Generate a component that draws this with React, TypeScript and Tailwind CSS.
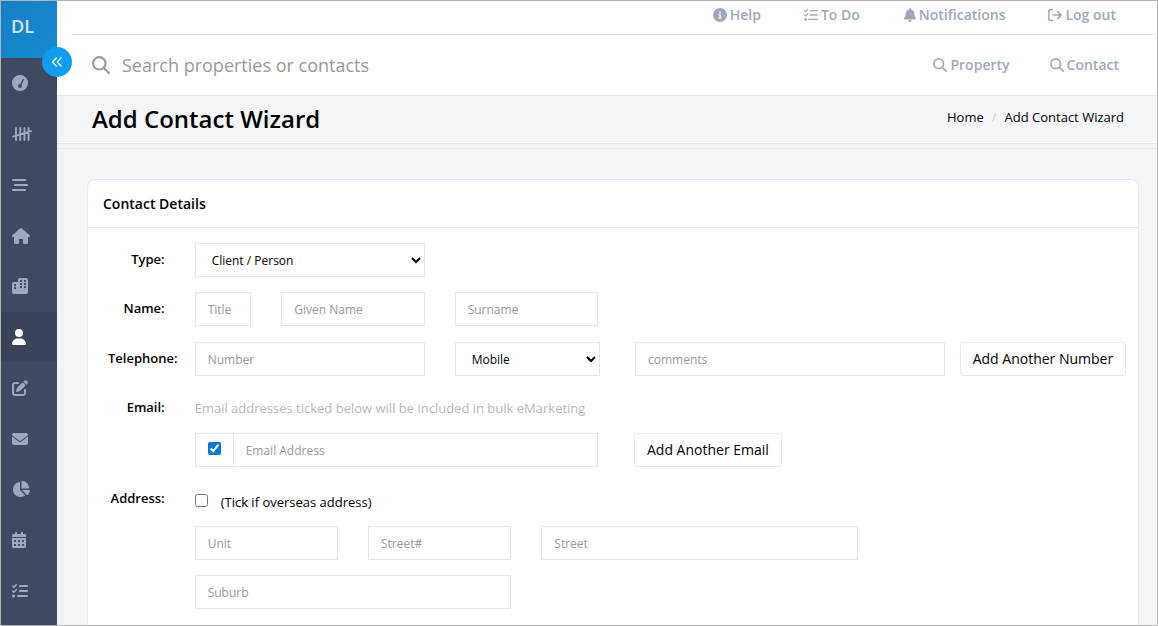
import React from "react";
import {
  FaBarsStaggered,
  FaBell,
  FaCalendarDays,
  FaChartPie,
  FaCircleInfo,
  FaEnvelope,
  FaGaugeSimpleHigh,
  FaHouse,
  FaListCheck,
  FaPenToSquare,
  FaUser,
} from "react-icons/fa6";

type IconProps = { className?: string };

function TallyIcon({ className }: IconProps) {
  return (
    <svg viewBox="0 0 20 16" className={className} fill="none" stroke="currentColor" strokeWidth="1.9" strokeLinecap="round" aria-hidden="true">
      <path d="M4 2v12M8.2 2v12M12.4 2v12M16.6 2v12M1 10.6 19 5.2" />
    </svg>
  );
}

function CityIcon({ className }: IconProps) {
  return (
    <svg viewBox="0 0 16 16" className={className} fill="currentColor" fillRule="evenodd" aria-hidden="true">
      <path d="M8 0h6a2 2 0 0 1 2 2v12a2 2 0 0 1-2 2H2a2 2 0 0 1-2-2V6a2 2 0 0 1 2-2h4V2a2 2 0 0 1 2-2ZM8 2v2h2V2ZM12 2v2h2V2ZM8 5v2h2V5ZM12 5v2h2V5ZM8 8v2h2V8ZM12 8v2h2V8ZM2 6v2h2V6ZM2 9v2h2V9Z" />
    </svg>
  );
}

function SearchIcon({ className }: IconProps) {
  return (
    <svg viewBox="0 0 18 18" className={className} fill="none" stroke="currentColor" strokeWidth="2.1" strokeLinecap="round" aria-hidden="true">
      <circle cx="7.3" cy="7.3" r="6.2" />
      <path d="m11.900 11.900 5 5" />
    </svg>
  );
}

function TaskListIcon({ className }: IconProps) {
  return (
    <svg viewBox="0 0 16 16" className={className} fill="none" stroke="currentColor" strokeWidth="1.5" strokeLinecap="round" strokeLinejoin="round" aria-hidden="true">
      <path d="M7 3h8.200M7 8h8.200M5.500 13h9.700M.8 3l1.200 1.200L4.200 1.600M.8 8l1.200 1.200L4.200 6.600" />
      <circle cx="1.900" cy="13" r=".7" />
    </svg>
  );
}

function LogOutIcon({ className }: IconProps) {
  return (
    <svg viewBox="0 0 16 16" className={className} fill="none" stroke="currentColor" strokeWidth="1.800" strokeLinecap="round" strokeLinejoin="round" aria-hidden="true">
      <path d="M5 1.800H3.200A2.200 2.200 0 0 0 1 4v8a2.200 2.200 0 0 0 2.200 2.200H5M5.800 8h9.200M11.200 4.200 15 8l-3.800 3.800" />
    </svg>
  );
}

function CollapseIcon({ className }: IconProps) {
  return (
    <svg viewBox="0 0 12 12" className={className} fill="none" stroke="currentColor" strokeWidth="1.300" strokeLinecap="round" strokeLinejoin="round" aria-hidden="true">
      <path d="M5.300 2 1.500 6l3.800 4M10 2 6.200 6l3.800 4" />
    </svg>
  );
}

const sideItems = [
  { label: "Dashboard", icon: <FaGaugeSimpleHigh className="h-4 w-4" /> },
  { label: "Tally", icon: <TallyIcon className="h-4 w-5" /> },
  { label: "Feed", icon: <FaBarsStaggered className="h-4 w-4" /> },
  { label: "Properties", icon: <FaHouse className="h-4 w-[18px]" /> },
  { label: "Projects", icon: <CityIcon className="h-4 w-4" /> },
  { label: "Contacts", icon: <FaUser className="h-4 w-3.5" />, active: true },
  { label: "Edit", icon: <FaPenToSquare className="h-4 w-4" /> },
  { label: "Mail", icon: <FaEnvelope className="h-4 w-4" /> },
  { label: "Reports", icon: <FaChartPie className="h-4 w-[18px]" /> },
  { label: "Calendar", icon: <FaCalendarDays className="h-4 w-3.5" /> },
  { label: "Tasks", icon: <FaListCheck className="h-4 w-4" /> },
];

const field =
  "block h-[34px] w-full min-w-0 border border-[#e5e6e7] bg-white px-3 text-xs text-black placeholder:text-[#999999] focus:outline-none";
const selectField =
  "block h-[34px] w-full min-w-0 border border-[#e5e6e7] bg-white px-3 text-xs text-black";
const formRow = "grid grid-cols-12";
const labelCell = "col-span-1 px-[15px] pt-[7px] text-right text-[13px] leading-[18px] font-semibold whitespace-nowrap";
const outlineButton =
  "h-[34px] rounded-[3px] border border-[#e7eaec] bg-white px-3 text-sm whitespace-nowrap text-black";
const navLink = "flex items-center gap-[3px]";

function Field({ label, className }: { label: string; className: string }) {
  return (
    <div className={className}>
      <input type="text" aria-label={label} placeholder={label} className={field} />
    </div>
  );
}

export default function App() {
  return (
    <div className="flex min-h-screen border border-[#b4b4b4] bg-[#f3f5f9] font-['Open_Sans',sans-serif] text-black">
      <aside className="relative w-14 shrink-0 bg-[#3f4a60]">
        <a href="#home" className="flex h-[57px] items-center bg-linear-to-br from-[#1680c6] to-[#178bd3] px-2.5 pb-2 text-lg font-semibold text-[#dce6ef]">
          DL
        </a>
        <button type="button" aria-label="Collapse menu" className="absolute top-[46px] left-[41px] z-10 flex h-[30px] w-[30px] items-center justify-center rounded-full bg-[#109cf1] text-white">
          <CollapseIcon className="h-3 w-3" />
        </button>
        <nav className="flex h-[558px] flex-col text-[#9fa8bd]">
          {sideItems.map((item) => (
            <a
              key={item.label}
              href={"#" + item.label.toLowerCase()}
              aria-label={item.label}
              className={item.active ? "flex flex-1 items-center bg-[#3a4459] pl-[11px] text-white" : "flex flex-1 items-center pl-[11px]"}
            >
              {item.icon}
            </a>
          ))}
        </nav>
      </aside>

      <div className="flex min-w-0 flex-1 flex-col">
        <header className="border-b border-[#e7eaec] bg-white">
          <nav className="mr-[3px] ml-[15px] flex h-[34px] items-start justify-end gap-[43px] border-b border-[#dddddd] pt-1 pr-[38px] text-sm leading-5 font-semibold text-[#a0a7bd]">
            <a href="#help" className={navLink}>
              <FaCircleInfo className="h-3.5 w-3.5" />
              Help
            </a>
            <a href="#todo" className={navLink}>
              <TaskListIcon className="h-3.5 w-3.5" />
              To Do
            </a>
            <a href="#notifications" className="flex items-center gap-0.5">
              <FaBell className="h-3.5 w-3.5" />
              Notifications
            </a>
            <a href="#logout" className={navLink}>
              <LogOutIcon className="h-3.5 w-3.5" />
              Log out
            </a>
          </nav>
          <div className="flex h-[60px] items-center pr-[38px] pl-[35px]">
            <label htmlFor="search" className="text-[#999999]">
              <SearchIcon className="h-[18px] w-[18px]" />
            </label>
            <input
              id="search"
              type="text"
              aria-label="Search"
              placeholder="Search properties or contacts"
              className="ml-3 min-w-0 flex-1 bg-transparent text-lg placeholder:text-[#999999] focus:outline-none"
            />
            <nav className="flex gap-10 text-sm leading-5 font-semibold text-[#a0a7bd]">
              <a href="#property" className={navLink}>
                <SearchIcon className="h-3.5 w-3.5" />
                Property
              </a>
              <a href="#contact" className={navLink}>
                <SearchIcon className="h-3.5 w-3.5" />
                Contact
              </a>
            </nav>
          </div>
        </header>

        <div className="border-b border-[#e7eaec] pb-1">
          <div className="flex h-12 items-start justify-between border-b border-[#e7eaec] pr-[33px] pl-[35px] shadow-[inset_0_-1px_0_#ffffff]">
            <h1 className="pt-[7px] text-2xl leading-8 font-semibold">Add Contact Wizard</h1>
            <ol className="flex gap-2 pt-[11px] text-[13px] leading-5">
              <li>
                <a href="#home">Home</a>
              </li>
              <li aria-hidden="true" className="text-[#cccccc]">/</li>
              <li>
                <a href="#wizard">Add Contact Wizard</a>
              </li>
            </ol>
          </div>
        </div>

        <main className="flex flex-1 flex-col pt-[30px] pr-[18px] pl-[30px]">
          <section className="flex-1 rounded-t-lg border border-b-0 border-[#e7eaec] bg-white">
            <h2 className="border-b border-[#e7eaec] px-[15px] py-3.5 text-sm leading-[19px] font-semibold">Contact Details</h2>
            <form className="flex flex-col px-[5px] py-[15px]">
              <div className={formRow}>
                <label htmlFor="type" className={labelCell}>Type:</label>
                <div className="col-span-3 px-[15px]">
                  <select id="type" className={selectField}>
                    <option>Client / Person</option>
                    <option>Company</option>
                  </select>
                </div>
              </div>

              <div className={formRow + " mt-[15px]"}>
                <span className={labelCell}>Name:</span>
                <Field label="Title" className="col-span-1 px-[15px]" />
                <Field label="Given Name" className="col-span-2 px-[15px]" />
                <Field label="Surname" className="col-span-2 px-[15px]" />
              </div>

              <div className={formRow + " mt-4"}>
                <span className={labelCell}>Telephone:</span>
                <Field label="Number" className="col-span-3 px-[15px]" />
                <div className="col-span-2 pr-[13px] pl-[15px]">
                  <select aria-label="Number type" className={selectField}>
                    <option>Mobile</option>
                    <option>Home</option>
                    <option>Work</option>
                  </select>
                </div>
                <Field label="comments" className="col-span-4 pr-[15px] pl-[22px]" />
                <div className="col-span-2">
                  <button type="button" className={outlineButton}>Add Another Number</button>
                </div>
              </div>

              <div className={formRow + " mt-[15px]"}>
                <span className={labelCell}>Email:</span>
                <p className="col-span-8 px-[15px] pt-2 text-[13px] leading-[18px] text-[#b8b8b8]">
                  Email addresses ticked below will be included in bulk eMarketing
                </p>
              </div>

              <div className={formRow + " mt-4"}>
                <div className="col-span-5 col-start-2 flex px-[15px]">
                  <div className="flex w-[38px] shrink-0 items-center justify-center border border-r-0 border-[#e5e6e7] pb-1">
                    <input type="checkbox" defaultChecked aria-label="Include in bulk eMarketing" className="h-[13px] w-[13px] accent-[#0078d7]" />
                  </div>
                  <input type="text" aria-label="Email Address" placeholder="Email Address" className={field} />
                </div>
                <div className="col-span-3 pl-[21px]">
                  <button type="button" className={outlineButton}>Add Another Email</button>
                </div>
              </div>

              <div className={formRow + " mt-[15px]"}>
                <span className={labelCell}>Address:</span>
                <label className="col-span-5 flex items-center gap-[13px] px-[15px] pt-[11px] text-[13px] leading-[18px]">
                  <input type="checkbox" className="mb-1 h-[13px] w-[13px] shrink-0" />
                  (Tick if overseas address)
                </label>
              </div>

              <div className={formRow + " mt-[15px]"}>
                <Field label="Unit" className="col-span-2 col-start-2 px-[15px]" />
                <Field label="Street#" className="col-span-2 px-[15px]" />
                <Field label="Street" className="col-span-4 px-[15px]" />
              </div>

              <div className={formRow + " mt-[15px]"}>
                <Field label="Suburb" className="col-span-4 col-start-2 px-[15px]" />
              </div>
            </form>
          </section>
        </main>
      </div>
    </div>
  );
}
